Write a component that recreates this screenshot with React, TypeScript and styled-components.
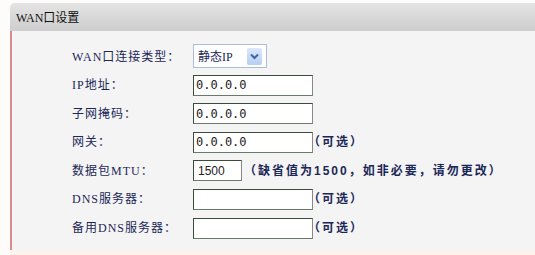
import React from 'react';
import styled, { createGlobalStyle } from 'styled-components';

const GlobalStyle = createGlobalStyle`
  body {
    margin: 0;
    background: #fdfcfa;
    font-family: 'Liberation Serif', 'Noto Sans CJK SC', serif;
  }
`;

const Panel = styled.div`
  margin: 3px 0 0 10px;
  width: 525px;
`;

const Header = styled.div`
  height: 28px;
  display: flex;
  align-items: center;
  padding-left: 6px;
  border-top-left-radius: 5px;
  background: linear-gradient(to bottom, #e4e4e4 0%, #d6d6d6 60%, #cdcdcd 100%);
  font-size: 12px;
  color: #111;
`;

const Body = styled.div`
  height: 204px;
  border-left: 2px solid #d98c8c;
  background: #f4f4f4;
  padding: 15px 0 0 60px;
  display: grid;
  grid-template-columns: 121px 1fr;
  align-content: start;
  row-gap: 7.6px;
  align-items: center;
`;

const Label = styled.div`
  font-size: 12px;
  color: #1b2757;
  line-height: 14px;
  letter-spacing: 1px;
  white-space: nowrap;
`;

const Field = styled.div`
  display: flex;
  align-items: center;
  height: 21px;
`;

const Select = styled.div`
  width: 74px;
  height: 24px;
  border: 1px solid #a9bed6;
  background: #fff;
  display: flex;
  align-items: center;
  justify-content: space-between;
  padding: 0 4px 0 4px;
  box-sizing: border-box;
  font-size: 12px;
  color: #1b2757;
  margin: -2px 0 -1px;
`;

const DropButton = styled.div`
  width: 15px;
  height: 17px;
  background: linear-gradient(to bottom, #dbe8fb, #b8cff0);
  border-radius: 2px;
  display: flex;
  align-items: center;
  justify-content: center;
`;

const Input = styled.div<{ $w: number; $num?: boolean }>`
  width: ${p => p.$w}px;
  height: 21px;
  box-sizing: border-box;
  border: 1px solid #3c4c3c;
  border-right-color: #888;
  border-bottom-color: #6a7a6a;
  background: #fff;
  font-family: ${p => (p.$num ? "'Liberation Sans', Arial, sans-serif" : "'DejaVu Sans Mono', monospace")};
  font-size: 12px;
  color: #222;
  padding-left: ${p => (p.$num ? 4 : 2)}px;
  display: flex;
  align-items: center;
`;

const Hint = styled.span<{ $gap: number }>`
  font-family: 'Liberation Sans', 'Noto Sans CJK SC', sans-serif;
  font-size: 12px;
  line-height: 14px;
  letter-spacing: 2px;
  color: #1b2757;
  font-weight: bold;
  white-space: nowrap;
  margin-left: ${p => p.$gap}px;
`;

const Rest = styled.div`
  height: 5px;
  margin-left: 10px;
  background: #fbf3ec;
`;

const rows = [
  { label: 'IP地址：', value: '0.0.0.0' },
  { label: '子网掩码：', value: '0.0.0.0' },
  { label: '网关：', value: '0.0.0.0', hint: '（可选）' },
];

const dnsRows = [
  { label: 'DNS服务器：', hint: '（可选）' },
  { label: '备用DNS服务器：', hint: '（可选）' },
];

const App: React.FC = () => (
  <>
    <GlobalStyle />
    <Panel>
      <Header>WAN口设置</Header>
      <Body>
        <Label>WAN口连接类型：</Label>
        <Field>
          <Select>
            <span>静态IP</span>
            <DropButton>
              <svg width="9" height="7" viewBox="0 0 9 7">
                <path d="M1 1.5 L4.5 5 L8 1.5" stroke="#3f64a8" strokeWidth="2" fill="none" />
              </svg>
            </DropButton>
          </Select>
        </Field>
        {rows.map(r => (
          <React.Fragment key={r.label}>
            <Label>{r.label}</Label>
            <Field>
              <Input $w={120}>{r.value}</Input>
              {r.hint && <Hint $gap={-5}>{r.hint}</Hint>}
            </Field>
          </React.Fragment>
        ))}
        <Label>数据包MTU：</Label>
        <Field>
          <Input $w={49} $num>1500</Input>
          <Hint $gap={2}>（缺省值为1500，如非必要，请勿更改）</Hint>
        </Field>
        {dnsRows.map(r => (
          <React.Fragment key={r.label}>
            <Label>{r.label}</Label>
            <Field>
              <Input $w={120} />
              <Hint $gap={-5}>{r.hint}</Hint>
            </Field>
          </React.Fragment>
        ))}
      </Body>
    </Panel>
    <Rest />
  </>
);

export default App;
